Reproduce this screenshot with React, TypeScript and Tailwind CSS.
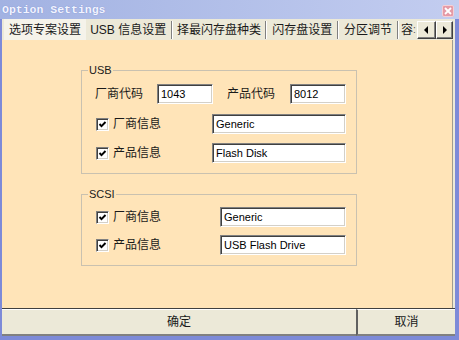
import React from "react";

// Field widths are written out so Tailwind picks them up
function Field({ value, w }: { value: string; w: string }) {
  return (
    <div
      className={`flex h-[20px] shrink-0 items-center border border-t-[#808080] border-l-[#808080] border-r-white border-b-white bg-white pl-[3px] text-[11px] text-black shadow-[inset_1px_1px_0_#404040,inset_-1px_-1px_0_#d4d0c8] ${w}`}
    >
      {value}
    </div>
  );
}

function Check() {
  return (
    <span className="flex h-[13px] w-[13px] shrink-0 items-center justify-center border border-t-[#808080] border-l-[#808080] border-r-white border-b-white bg-white shadow-[inset_1px_1px_0_#404040,inset_-1px_-1px_0_#d4d0c8]">
      <svg width="9" height="9" viewBox="0 0 9 9" aria-hidden>
        <path d="M1.5 4L3.5 6.2L7.5 2" stroke="#000" strokeWidth="1.9" fill="none" />
      </svg>
    </span>
  );
}

function CheckRow({ label, value, w }: { label: string; value: string; w: string }) {
  return (
    <div className="flex items-center">
      <span className="ml-[1px]">
        <Check />
      </span>
      <span className="ml-[4px] leading-none">{label}</span>
      <span className="ml-auto">
        <Field value={value} w={w} />
      </span>
    </div>
  );
}

function Sep() {
  return <div className="h-[18px] w-[2px] shrink-0 self-center border-l border-r border-l-[#808080] border-r-white" />;
}

function ScrollBtn({ dir, w }: { dir: "l" | "r"; w: string }) {
  return (
    <div
      className={`flex h-[18px] shrink-0 items-center justify-center border border-t-white border-l-white border-r-[#404040] border-b-[#404040] bg-[#ece9d8] shadow-[inset_-1px_-1px_0_#808080] ${w}`}
    >
      <svg width="5" height="8" viewBox="0 0 5 8" aria-hidden>
        {dir === "l" ? <path d="M4 0V8L0 4Z" fill="#000" /> : <path d="M1 0V8L5 4Z" fill="#000" />}
      </svg>
    </div>
  );
}

export default function App() {
  return (
    <div className="flex h-[340px] w-[459px] flex-col overflow-hidden bg-[#ece9d8] font-['Liberation_Sans','Noto_Sans_CJK_SC',sans-serif] text-[12px] text-[#1a1a1a]">
      {/* Title bar */}
      <div className="flex h-[19px] shrink-0 items-center bg-gradient-to-r from-[#a2b2e2] to-[#c3cdf0] pl-[2px] pr-[5px]">
        <span className="font-['Liberation_Mono',monospace] text-[11.5px] font-bold text-[#f2f4ff] [text-shadow:0_0_1px_#7080c8]">
          Option Settings
        </span>
        <div className="ml-auto mt-[3px] flex h-[12px] w-[12px] items-center justify-center rounded-[2px] border border-[#f4d0d6] bg-[#e59aa6]">
          <svg width="8" height="8" viewBox="0 0 8 8" aria-hidden>
            <path d="M1 1L7 7M7 1L1 7" stroke="#fff" strokeWidth="1.8" />
          </svg>
        </div>
      </div>

      <div className="flex flex-1 flex-col border-l-2 border-r-4 border-b-4 border-[#7d8ad8]">
        {/* Tab strip */}
        <div className="flex h-[21px] shrink-0 items-stretch pl-[2px] pr-[2px]">
          <div className="flex w-[82px] items-center justify-center bg-[#f5f3ea]">选项专案设置</div>
          <div className="flex w-[85px] items-center justify-center">USB 信息设置</div>
          <Sep />
          <div className="flex w-[93px] items-center justify-center">择最闪存盘种类</div>
          <Sep />
          <div className="flex w-[70px] items-center justify-center">闪存盘设置</div>
          <Sep />
          <div className="flex w-[58px] items-center justify-center">分区调节</div>
          <Sep />
          <div className="flex w-[18px] items-center whitespace-nowrap pl-[2px]">
            容<span className="text-[10px] leading-none text-[#555]">:</span>
          </div>
          <div className="flex items-center">
            <ScrollBtn dir="l" w="w-[19px]" />
            <ScrollBtn dir="r" w="w-[17px]" />
          </div>
        </div>

        {/* Page */}
        <div className="mr-[2px] flex flex-1 flex-col border-r border-[#a09c90] bg-[#ffe4b8]">
          <fieldset className="ml-[79px] mt-[24px] w-[276px] border border-[#c9c1b0] pb-[10px]">
            <legend className="ml-[6px] px-[1px] text-[11px] leading-[13px]">USB</legend>
            <div className="pl-[13px] pr-[10px]">
              <div className="mt-[7px] flex items-center">
                <span className="w-[62px] leading-none">厂商代码</span>
                <Field value="1043" w="w-[56px]" />
                <span className="ml-[14px] w-[63px] leading-none">产品代码</span>
                <Field value="8012" w="w-[56px]" />
              </div>
              <div className="mt-[10px]">
                <CheckRow label="厂商信息" value="Generic" w="w-[134px]" />
              </div>
              <div className="mt-[9px]">
                <CheckRow label="产品信息" value="Flash Disk" w="w-[134px]" />
              </div>
            </div>
          </fieldset>

          <fieldset className="ml-[79px] mt-[14px] w-[276px] border border-[#c9c1b0] pb-[10px]">
            <legend className="ml-[6px] px-[1px] text-[11px] leading-[13px]">SCSI</legend>
            <div className="pl-[13px] pr-[10px]">
              <div className="mt-[6px]">
                <CheckRow label="厂商信息" value="Generic" w="w-[126px]" />
              </div>
              <div className="mt-[8px]">
                <CheckRow label="产品信息" value="USB Flash Drive" w="w-[126px]" />
              </div>
            </div>
          </fieldset>
        </div>

        {/* Buttons */}
        <div className="flex h-[28px] shrink-0 border-t border-[#404040]">
          <div className="flex w-[354px] items-center justify-center border-t border-b-2 border-t-white border-b-[#808080]">确定</div>
          <div className="flex flex-1 items-center justify-center border-l-2 border-t border-b-2 border-l-[#606060] border-t-white border-b-[#808080]">取消</div>
        </div>
      </div>
    </div>
  );
}
